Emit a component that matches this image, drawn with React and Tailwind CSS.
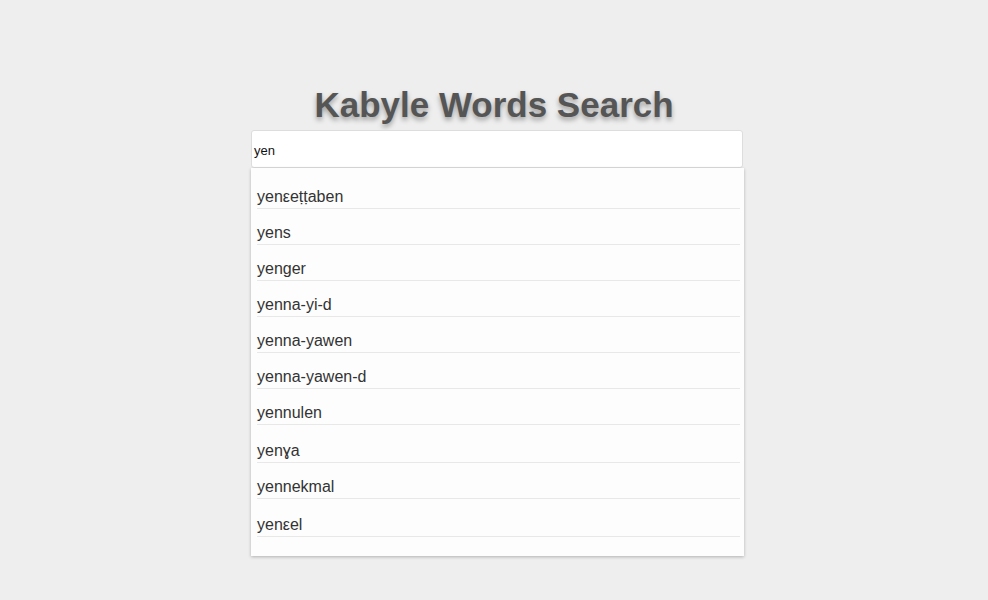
import React from 'react';

const words = [
  { w: 'yenεeṭṭaben', h: 'h-[36px]' },
  { w: 'yens', h: 'h-[36px]' },
  { w: 'yenger', h: 'h-[36px]' },
  { w: 'yenna-yi-d', h: 'h-[36px]' },
  { w: 'yenna-yawen', h: 'h-[36px]' },
  { w: 'yenna-yawen-d', h: 'h-[36px]' },
  { w: 'yennulen', h: 'h-[36px]' },
  { w: 'yenɣa', h: 'h-[38px]' },
  { w: 'yennekmal', h: 'h-[36px]' },
  { w: 'yenεel', h: 'h-[38px]' },
];

export default function App() {
  return (
    <div className="min-h-[600px] bg-[#eeeeee] font-['Liberation_Sans',Arial,sans-serif]">
      <div className="flex flex-col items-center pt-[84px]">
        <h1 className="text-[35px] font-bold leading-[42px] text-[#555555] [text-shadow:0_3px_5px_rgba(0,0,0,0.35)]">
          Kabyle Words Search
        </h1>
        <div className="w-[493px] ml-[7px] mt-[4px]">
          <div className="h-[38px] w-[492px] bg-white border border-[#dddddd] rounded-[3px] flex items-center pl-[2px] pt-[3px] text-[13px] text-[#111111]">
            yen
          </div>
          <div className="w-[493px] bg-[#fdfdfd] shadow-[0_1px_3px_rgba(0,0,0,0.25)] pt-[5px] pb-[19px]">
            {words.map((item, idx) => (
              <div
                key={idx}
                className={`${item.h} ml-[6px] mr-[4px] border-b border-[#e8e8e8] flex items-end pb-[2px] text-[16px] leading-[18px] text-[#333333]`}
              >
                {item.w}
              </div>
            ))}
          </div>
        </div>
      </div>
    </div>
  );
}
